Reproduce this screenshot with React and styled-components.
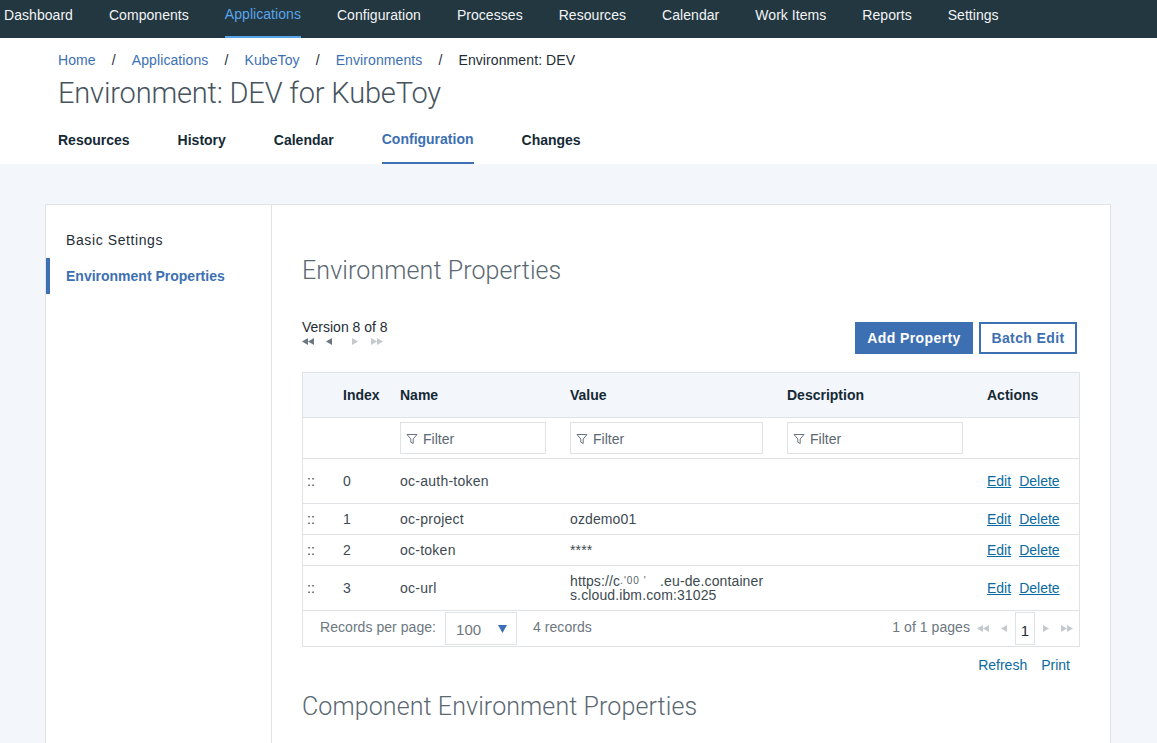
import React from 'react';
import styled, { createGlobalStyle } from "styled-components";

const GlobalStyle = createGlobalStyle`
    html, body {
        margin: 0;
        padding: 0;
        height: 743px;
        overflow: hidden;
        background-color: #f3f6fb;
        font-family: "Liberation Sans", Arial, sans-serif;
        color: #1f2d36;
    }
    * {
        box-sizing: border-box;
    }
`
const TopNav = styled.div`
    display: flex;
    height: 38px;
    padding-left: 4px;
    gap: 36px;
    background-color: #233741;
`
const TopNavItem = styled.div`
    height: 38px;
    line-height: ${props => props.$active ? '29px' : '31px'};
    font-size: 14px;
    letter-spacing: 0.05px;
    color: ${props => props.$active ? '#5aa5e8' : '#f2f4f5'};
    border-bottom: 2px solid ${props => props.$active ? '#5aa5e8' : 'transparent'};
`
const Header = styled.div`
    height: 126px;
    padding: 14px 0 0 58px;
    background-color: #fff;
`
const Crumbs = styled.div`
    display: flex;
    gap: 16px;
    height: 16px;
    line-height: 16px;
    font-size: 14px;
    letter-spacing: 0.1px;
    color: #1f2d36;
`
const Crumb = styled.span`
    color: ${props => props.$link ? '#3d70b2' : '#1f2d36'};
`
const PageTitle = styled.h1`
    margin: 5px 0 0;
    height: 40px;
    line-height: 40px;
    font-family: Roboto, "Liberation Sans", sans-serif;
    font-size: 29px;
    font-weight: 300;
    letter-spacing: -0.17px;
    color: #46545e;
`
const Tabs = styled.div`
    display: flex;
    gap: 48px;
    margin-top: 15px;
`
const Tab = styled.div`
    height: 36px;
    padding-top: ${props => props.$active ? '3px' : '4px'};
    line-height: 16px;
    font-size: 14px;
    font-weight: 700;
    color: ${props => props.$active ? '#3d70b2' : '#152935'};
    border-bottom: 2px solid ${props => props.$active ? '#3d70b2' : 'transparent'};
`
const Main = styled.div`
    padding: 40px 46px 0 45px;
`
const Card = styled.div`
    display: flex;
    height: 539px;
    background-color: #fff;
    border: 1px solid #dfe3e6;
    border-bottom: none;
`
const Sidebar = styled.div`
    flex: 0 0 226px;
    padding-top: 17px;
    border-right: 1px solid #dfe3e6;
`
const SideItem = styled.div`
    height: 36px;
    padding-left: ${props => props.$active ? '16px' : '20px'};
    line-height: 36px;
    font-size: 14px;
    font-weight: ${props => props.$active ? 700 : 400};
    letter-spacing: ${props => props.$active ? '0' : '0.6px'};
    color: ${props => props.$active ? '#3d70b2' : '#1f2d36'};
    border-left: ${props => props.$active ? '4px solid #3d70b2' : 'none'};
`
const Content = styled.div`
    flex: 1;
    padding: 0 30px;
`
const SectionTitle = styled.h2`
    margin: ${props => props.$first ? '46px' : '0'} 0 0;
    height: 40px;
    line-height: 40px;
    font-family: Roboto, "Liberation Sans", sans-serif;
    font-size: 25px;
    font-weight: 300;
    letter-spacing: 0.1px;
    color: #5a6872;
`
const ToolRow = styled.div`
    display: flex;
    justify-content: space-between;
    height: 55px;
    margin-top: 26px;
`
const Version = styled.div`
    padding-top: 3px;
    line-height: 14px;
    font-size: 14px;
    color: #1f2d36;
`
const Pager = styled.div`
    display: flex;
    align-items: center;
    gap: ${props => props.$gap}px;
    height: ${props => props.$tall ? '33px' : '14px'};
`
const Buttons = styled.div`
    display: flex;
    gap: 6px;
    padding: 5px 3px 0 0;
`
const Button = styled.button`
    height: 32px;
    padding: 0;
    width: ${props => props.$w}px;
    font-family: inherit;
    font-size: 14px;
    font-weight: 700;
    letter-spacing: 0.4px;
    color: ${props => props.$primary ? '#fff' : '#3d70b2'};
    background-color: ${props => props.$primary ? '#3d70b2' : '#fff'};
    border: 2px solid #3d70b2;
`
const Table = styled.div`
    width: 778px;
    border: 1px solid #dfe3e6;
`
const Row = styled.div`
    display: grid;
    grid-template-columns: 40px 57px 170px 217px 200px 1fr;
    align-items: center;
    height: ${props => props.$h}px;
    font-size: 14px;
    color: #3d4a52;
    background-color: ${props => props.$head ? '#f3f6fb' : '#fff'};
    border-bottom: 1px solid #dfe3e6;
`
const HeadCell = styled.div`
    font-weight: 700;
    color: #152935;
`
const Handle = styled.div`
    padding-left: 4px;
`
const NameCell = styled.div`
    letter-spacing: 0.25px;
`
const FilterBox = styled.div`
    display: flex;
    align-items: center;
    gap: 5px;
    width: ${props => props.$w}px;
    height: 32px;
    padding: 1px 0 0 5px;
    color: #5a6872;
    border: 1px solid #dfe3e6;
`
const Value = styled.div`
    line-height: 14px;
    letter-spacing: 0.12px;
    white-space: nowrap;
`
const ValueLine = styled.div`
    height: 14px;
`
const Redacted = styled.span`
    display: inline-block;
    width: 40px;
    font-size: 10px;
    line-height: 8px;
    letter-spacing: 1px;
    vertical-align: 2px;
    color: #56636c;
`
const Actions = styled.div`
    display: flex;
    gap: 8px;
`
const ActionLink = styled.a`
    color: #0a6aa1;
    text-decoration: underline;
`
const Footer = styled.div`
    display: flex;
    align-items: center;
    height: 35px;
    padding: 0 6px 0 17px;
    font-size: 14px;
    letter-spacing: 0.05px;
    color: #6d7780;
`
const FooterText = styled.span`
    padding-bottom: 4px;
    margin-right: ${props => props.$tight ? '-5px' : '0'};
`
const PerPage = styled.div`
    display: flex;
    align-items: center;
    justify-content: space-between;
    width: 72px;
    height: 33px;
    margin: 0 16px 0 9px;
    padding: 1px 9px 0 10px;
    font-size: 15px;
    color: #6d7780;
    border: 1px solid #dfe3e6;
`
const PageInfo = styled.div`
    display: flex;
    align-items: center;
    margin-left: auto;
`
const PageNumber = styled.div`
    width: 20px;
    height: 33px;
    margin: 0 8px;
    padding-top: 2px;
    line-height: 31px;
    text-align: center;
    font-size: 15px;
    color: #1f2d36;
    border: 1px solid #dfe3e6;
`
const TableLinks = styled.div`
    display: flex;
    justify-content: flex-end;
    gap: 14px;
    width: 778px;
    height: 40px;
    padding: 10px 10px 0 0;
    line-height: 16px;
    font-size: 14px;
    color: #0a6aa1;
`

const navItems = ["Dashboard", "Components", "Applications", "Configuration", "Processes", "Resources", "Calendar", "Work Items", "Reports", "Settings"];
const tabs = ["Resources", "History", "Calendar", "Configuration", "Changes"];
const rows = [
  { index: 0, name: "oc-auth-token", value: "", h: 45 },
  { index: 1, name: "oc-project", value: "ozdemo01", h: 31 },
  { index: 2, name: "oc-token", value: "****", h: 31 },
  { index: 3, name: "oc-url", h: 45, url: true },
];

// small triangle arrows used by both pagers
function Arrow({ dir, double, color }) {
  const size = 6;
  const tri = (x) => dir === 'left'
    ? `${x + size},0 ${x + size},7 ${x},3.5`
    : `${x},0 ${x},7 ${x + size},3.5`;
  const w = double ? size * 2 : size;
  return (
    <svg width={w} height="7" viewBox={`0 0 ${w} 7`}>
      <polygon points={tri(0)} fill={color} />
      {double && <polygon points={tri(size)} fill={color} />}
    </svg>
  );
}

function FilterIcon() {
  return (
    <svg width="12" height="12" viewBox="0 0 12 12" fill="none" stroke="#5a6872" strokeWidth="0.9">
      <path d="M1 1.5h10L7.2 6v4.5L4.8 9.3V6z" />
    </svg>
  );
}

function App() {
  return (
    <>
      <GlobalStyle />
      <TopNav>
        {navItems.map(item => <TopNavItem key={item} $active={item === "Applications"}>{item}</TopNavItem>)}
      </TopNav>
      <Header>
        <Crumbs>
          <Crumb $link>Home</Crumb><span>/</span>
          <Crumb $link>Applications</Crumb><span>/</span>
          <Crumb $link>KubeToy</Crumb><span>/</span>
          <Crumb $link>Environments</Crumb><span>/</span>
          <Crumb>Environment: DEV</Crumb>
        </Crumbs>
        <PageTitle>Environment: DEV for KubeToy</PageTitle>
        <Tabs>
          {tabs.map(tab => <Tab key={tab} $active={tab === "Configuration"}>{tab}</Tab>)}
        </Tabs>
      </Header>
      <Main>
        <Card>
          <Sidebar>
            <SideItem>Basic Settings</SideItem>
            <SideItem $active>Environment Properties</SideItem>
          </Sidebar>
          <Content>
            <SectionTitle $first>Environment Properties</SectionTitle>
            <ToolRow>
              <Version>
                Version 8 of 8
                <Pager $gap={20}>
                  <Pager $gap={12}>
                    <Arrow dir="left" double color="#6d7780" />
                    <Arrow dir="left" color="#6d7780" />
                  </Pager>
                  <Pager $gap={13}>
                    <Arrow dir="right" color="#c4c9cd" />
                    <Arrow dir="right" double color="#c4c9cd" />
                  </Pager>
                </Pager>
              </Version>
              <Buttons>
                <Button $primary $w={118}>Add Property</Button>
                <Button $w={98}>Batch Edit</Button>
              </Buttons>
            </ToolRow>
            <Table>
              <Row $head $h={45}>
                <div />
                <HeadCell>Index</HeadCell>
                <HeadCell>Name</HeadCell>
                <HeadCell>Value</HeadCell>
                <HeadCell>Description</HeadCell>
                <HeadCell>Actions</HeadCell>
              </Row>
              <Row $h={41}>
                <div />
                <div />
                <FilterBox $w={146}><FilterIcon />Filter</FilterBox>
                <FilterBox $w={193}><FilterIcon />Filter</FilterBox>
                <FilterBox $w={176}><FilterIcon />Filter</FilterBox>
                <div />
              </Row>
              {rows.map(row => (
                <Row key={row.index} $h={row.h}>
                  <Handle>::</Handle>
                  <div>{row.index}</div>
                  <NameCell>{row.name}</NameCell>
                  <Value>
                    {row.url
                      ? <>
                          <ValueLine>https://c<Redacted>.'00 '</Redacted>.eu-de.container</ValueLine>
                          <ValueLine>s.cloud.ibm.com:31025</ValueLine>
                        </>
                      : row.value}
                  </Value>
                  <div />
                  <Actions>
                    <ActionLink>Edit</ActionLink>
                    <ActionLink>Delete</ActionLink>
                  </Actions>
                </Row>
              ))}
              <Footer>
                <FooterText>Records per page:</FooterText>
                <PerPage>
                  100
                  <svg width="9" height="8" viewBox="0 0 9 8"><polygon points="0,0 9,0 4.5,8" fill="#3d70b2" /></svg>
                </PerPage>
                <FooterText>4 records</FooterText>
                <PageInfo>
                  <Pager $tall $gap={12}>
                    <FooterText $tight>1 of 1 pages</FooterText>
                    <Arrow dir="left" double color="#c4c9cd" />
                    <Arrow dir="left" color="#c4c9cd" />
                  </Pager>
                  <PageNumber>1</PageNumber>
                  <Pager $tall $gap={12}>
                    <Arrow dir="right" color="#c4c9cd" />
                    <Arrow dir="right" double color="#c4c9cd" />
                  </Pager>
                </PageInfo>
              </Footer>
            </Table>
            <TableLinks>
              <span>Refresh</span>
              <span>Print</span>
            </TableLinks>
            <SectionTitle>Component Environment Properties</SectionTitle>
          </Content>
        </Card>
      </Main>
    </>
  );
}

export default App;
